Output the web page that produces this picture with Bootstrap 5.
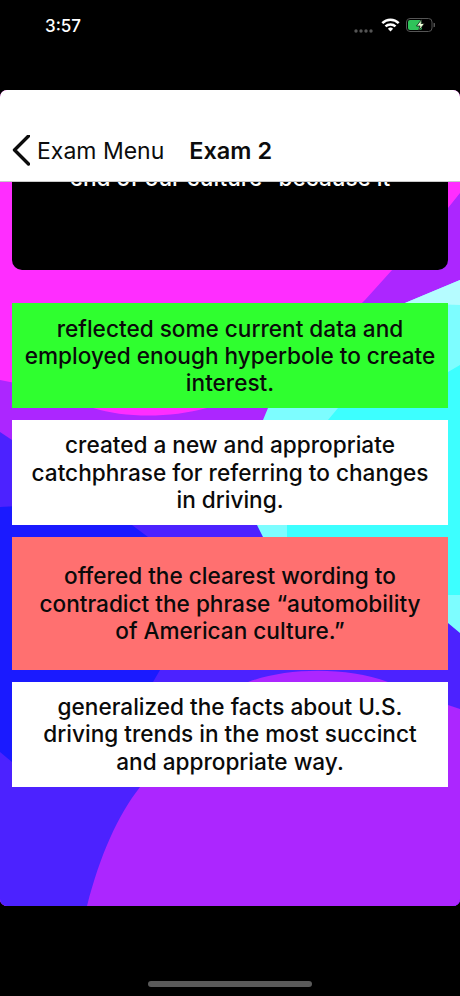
<!DOCTYPE html>
<html lang="en">
<head>
<meta charset="utf-8">
<title>Exam 2</title>
<link href="https://cdn.jsdelivr.net/npm/bootstrap@5.3.0/dist/css/bootstrap.min.css" rel="stylesheet">
<style>
html, body { height: 100%; background: #000; font-family: Inter, "Liberation Sans", sans-serif; }
.phone { height: 996px; width: 460px; overflow: hidden; }
.status-strip { height: 90px; padding: 16px 25px 0 45px; color: #fff; font-size: 17px; font-weight: 500; line-height: 21px; }
.status-icons { gap: 6px; }
.sig-dots { margin-top: 4px; margin-right: -1px; }
.sig-icon { margin-top: 2px; }
.app-screen { height: 816px; border-radius: 7px; background: #ff2dff; isolation: isolate; }
.backdrop { inset: 0; width: 460px; height: 816px; z-index: -1; }
.top-nav { top: 0; left: 0; right: 0; height: 92px; padding: 0 0 14px 12px; background: #fff; border-bottom: 1px solid #c9c9c9; z-index: 2; line-height: 30px; color: #0c0c0c; justify-content: flex-start; align-items: flex-end; flex-wrap: nowrap; }
.back-link { gap: 7px; color: #0c0c0c; text-decoration: none; font-size: 23px; }
.nav-heading { margin-left: 25px; margin-bottom: 1px; font-weight: 600; font-size: 23.5px; }
.exam-stack { padding: 0 12px; }
.question-box { height: 180px; margin-bottom: 33px; padding-top: 74px; background: #000; border-radius: 10px; color: #fff; font-size: 22.6px; line-height: 27.3px; font-weight: 500; }
.answers { gap: 12px; }
.answer-box { padding: 11.5px 12px; color: #0a0a0a; font-size: 22.6px; line-height: 27.3px; font-weight: 500; }
.answer-right { background: #2fff2f; }
.answer-plain { background: #fff; }
.answer-wrong { background: #ff7070; padding: 25.5px 24px; }
.home-strip { height: 90px; padding-top: 75px; }
.home-pill { width: 164px; height: 6px; border-radius: 3px; background: #5a5a5a; }
</style>
</head>
<body>
<div class="phone d-flex flex-column">
  <div class="status-strip d-flex justify-content-between">
    <span>3:57</span>
    <div class="status-icons d-flex align-items-start">
      <svg class="sig-dots" width="22" height="14" viewBox="0 0 22 14"><g fill="#555"><circle cx="2" cy="11" r="1.7"/><circle cx="7" cy="11" r="1.7"/><circle cx="12" cy="11" r="1.7"/><circle cx="17" cy="11" r="1.7"/></g></svg>
      <svg class="sig-icon" width="19" height="14" viewBox="0 0 19 14"><g fill="none" stroke="#fff" stroke-width="2.500"><path d="M1.300 5.200a11.500 11.500 0 0 1 16.400 0"/><path d="M4.500 8.400a7.200 7.200 0 0 1 10 0"/></g><path d="M6.900 10.700a3.800 3.800 0 0 1 5.200 0L9.500 13.600z" fill="#fff"/></svg>
      <svg class="sig-icon" width="29" height="14" viewBox="0 0 29 14"><rect x=".5" y=".5" width="25.500" height="13" rx="3.500" fill="none" stroke="#555"/><rect x="2" y="2" width="14" height="10" rx="2" fill="#2fc45a"/><path d="M27.500 4.800a2 2 0 0 1 0 4.400z" fill="#555"/><path d="M16 1 10.500 8h3.500l-1.500 5 6-7.500h-3.500z" fill="#eaffd8" stroke="#000" stroke-width=".7"/></svg>
    </div>
  </div>
  <main class="app-screen position-relative overflow-hidden">
    <svg class="backdrop position-absolute" viewBox="0 90 460 816" preserveAspectRatio="none" aria-hidden="true">
      <path fill="#ac26ff" d="M0 380C30 385 60 398 93 408C125 418 170 418 207 408C260 385 320 345 365 300L448 208L460 193V906H0Z"/>
      <path fill="#4c22ff" d="M0 432L12 440C90 465 180 475 260 480H460V906H0Z"/>
      <path fill="#1a1aff" d="M0 507C60 503 105 508 132 525L148 537C180 580 175 640 160 670L153 682C120 740 60 775 12 762L0 752Z"/>
      <path fill="#ac26ff" d="M87 906C100 855 118 815 140 787C165 740 200 700 248 682C285 668 345 666 388 682L448 705L460 709V906Z"/>
      <path fill="#7dfdff" d="M268 408L263 420C255 455 252 490 257 525L263 537L448 623L460 633V280L405 303C355 320 305 355 268 408Z"/>
      <path fill="#b5fcff" d="M405 303L460 280V305L405 303Z"/>
      <path fill="#3dffff" d="M338 408L328 420C295 450 285 490 287 525L287 537L448 595H460V365L448 372Z"/>
    </svg>
    <nav class="navbar top-nav position-absolute">
      <a href="#" class="back-link d-flex align-items-center">
        <svg width="18" height="32" viewBox="0 0 18 32"><path d="M16.500 1 2.500 15l14 14" fill="none" stroke="#0c0c0c" stroke-width="3.400" stroke-linecap="round" stroke-linejoin="round"/></svg>
        <span>Exam Menu</span>
      </a>
      <span class="nav-heading">Exam 2</span>
    </nav>
    <div class="exam-stack">
      <div class="question-box text-center">end of our culture” because it</div>
      <div class="answers d-flex flex-column">
        <div class="answer-box answer-right text-center">reflected some current data and employed enough hyperbole to create interest.</div>
        <div class="answer-box answer-plain text-center">created a new and appropriate catchphrase for referring to changes in driving.</div>
        <div class="answer-box answer-wrong text-center">offered the clearest wording to contradict the phrase “automobility of American culture.”</div>
        <div class="answer-box answer-plain text-center">generalized the facts about U.S. driving trends in the most succinct and appropriate way.</div>
      </div>
    </div>
  </main>
  <div class="home-strip d-flex justify-content-center"><div class="home-pill"></div></div>
</div>
<script src="https://cdn.jsdelivr.net/npm/bootstrap@5.3.0/dist/js/bootstrap.bundle.min.js"></script>
</body>
</html>
